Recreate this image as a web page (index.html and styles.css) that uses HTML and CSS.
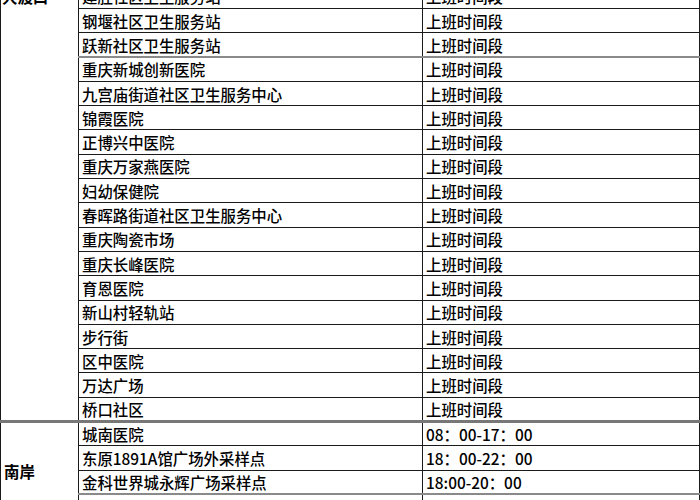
FILE: index.html
```html
<!DOCTYPE html>
<html lang="zh-CN">
<head>
<meta charset="utf-8">
<title>核酸采样点</title>
<link rel="stylesheet" href="styles.css">
</head>
<body>
<table class="sites">
  <colgroup>
    <col class="c-region">
    <col class="c-site">
    <col class="c-time">
  </colgroup>
  <tbody>
    <tr>
      <td class="region region-top" rowspan="18"><div class="region-label">大渡口</div></td>
      <td class="site">建胜社区卫生服务站</td>
      <td class="time">上班时间段</td>
    </tr>
    <tr><td class="site">钢堰社区卫生服务站</td><td class="time">上班时间段</td></tr>
    <tr><td class="site">跃新社区卫生服务站</td><td class="time">上班时间段</td></tr>
    <tr class="scan-line"><td class="site">重庆新城创新医院</td><td class="time">上班时间段</td></tr>
    <tr><td class="site">九宫庙街道社区卫生服务中心</td><td class="time">上班时间段</td></tr>
    <tr><td class="site">锦霞医院</td><td class="time">上班时间段</td></tr>
    <tr><td class="site">正博兴中医院</td><td class="time">上班时间段</td></tr>
    <tr><td class="site">重庆万家燕医院</td><td class="time">上班时间段</td></tr>
    <tr><td class="site">妇幼保健院</td><td class="time">上班时间段</td></tr>
    <tr><td class="site">春晖路街道社区卫生服务中心</td><td class="time">上班时间段</td></tr>
    <tr><td class="site">重庆陶瓷市场</td><td class="time">上班时间段</td></tr>
    <tr><td class="site">重庆长峰医院</td><td class="time">上班时间段</td></tr>
    <tr><td class="site">育恩医院</td><td class="time">上班时间段</td></tr>
    <tr><td class="site">新山村轻轨站</td><td class="time">上班时间段</td></tr>
    <tr><td class="site">步行街</td><td class="time">上班时间段</td></tr>
    <tr><td class="site">区中医院</td><td class="time">上班时间段</td></tr>
    <tr><td class="site">万达广场</td><td class="time">上班时间段</td></tr>
    <tr><td class="site">桥口社区</td><td class="time">上班时间段</td></tr>
    <tr class="group-start">
      <td class="region" rowspan="4">南岸</td>
      <td class="site">城南医院</td>
      <td class="time">08：00-17：00</td>
    </tr>
    <tr><td class="site">东原1891A馆广场外采样点</td><td class="time">18：00-22：00</td></tr>
    <tr><td class="site">金科世界城永辉广场采样点</td><td class="time">18:00-20：00</td></tr>
    <tr class="scan-line"><td class="site">南坪协信星光广场采样点</td><td class="time">18：00-22：00</td></tr>
  </tbody>
</table>
</body>
</html>
```

FILE: styles.css
```css
html, body {
  margin: 0;
  padding: 0;
  overflow: hidden;
  background: #ffffff;
}

body {
  font-family: "Noto Sans CJK SC", "Noto Sans", sans-serif;
  font-size: 15.4px;
  font-weight: 500;
  color: #000000;
}

.sites {
  border-collapse: collapse;
  table-layout: fixed;
  width: 699px;
  margin-top: -16.3px;
}

.c-region { width: 78px; }
.c-site { width: 344px; }
.c-time { width: 277px; }

.sites tr {
  height: 24.3px;
}

.sites td {
  border: 1px solid #1a1a1a;
  padding: 0 3px;
  line-height: 20px;
  white-space: nowrap;
  overflow: hidden;
  vertical-align: middle;
}

.region {
  font-weight: 700;
  padding-left: 4px;
}

.region-top {
  vertical-align: top !important;
  padding-top: 1px !important;
}

.region-label {
  margin-left: -2px;
}

.group-start td {
  border-top: 3px solid #777777;
}

.scan-line td {
  border-top: 2px solid #8a8a8a;
}
```
